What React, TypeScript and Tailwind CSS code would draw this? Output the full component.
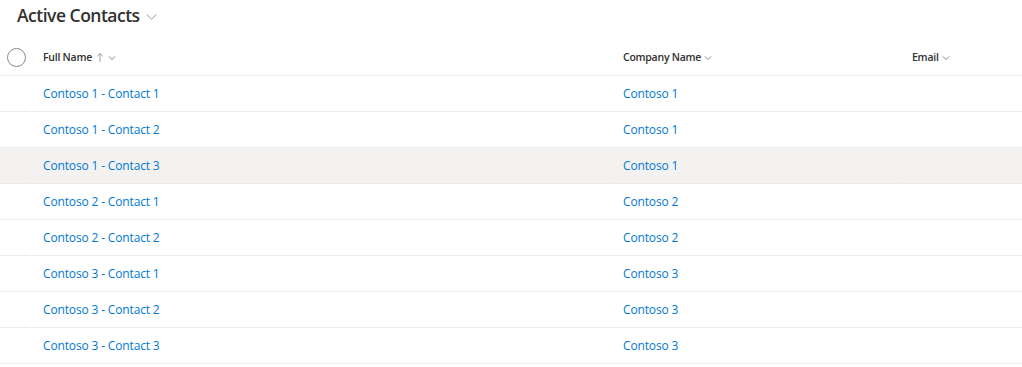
import React from 'react';

const rows = [
  { name: 'Contoso 1 - Contact 1', company: 'Contoso 1' },
  { name: 'Contoso 1 - Contact 2', company: 'Contoso 1' },
  { name: 'Contoso 1 - Contact 3', company: 'Contoso 1', hover: true },
  { name: 'Contoso 2 - Contact 1', company: 'Contoso 2' },
  { name: 'Contoso 2 - Contact 2', company: 'Contoso 2' },
  { name: 'Contoso 3 - Contact 1', company: 'Contoso 3' },
  { name: 'Contoso 3 - Contact 2', company: 'Contoso 3' },
  { name: 'Contoso 3 - Contact 3', company: 'Contoso 3' },
];

function Chevron({ className }: { className?: string }) {
  return (
    <svg viewBox="0 0 16 16" className={className} fill="none" stroke="currentColor" strokeWidth="1.2">
      <path d="M3 5.5l5 5 5-5" />
    </svg>
  );
}

const cols = 'grid grid-cols-[31px_579px_287px_1fr] gap-x-px';
const cell = 'border-b border-[#edebe9] flex items-center';

export default function App() {
  return (
    <div className="w-[1022px] h-[367px] bg-white overflow-hidden text-[#323130]" style={{ fontFamily: '"Open Sans", "Noto Sans", sans-serif' }}>
      <div className="h-[40px] flex items-center pl-[17px] pb-[8px]">
        <h1 className="text-[17.5px] font-semibold leading-none tracking-[-0.5px]">Active Contacts</h1>
        <svg viewBox="0 0 12 7" className="w-[11px] h-[6px] ml-[6px] mt-[2px] text-[#8a8886]" fill="none" stroke="currentColor" strokeWidth="1">
          <path d="M0.5 0.8L6 6l5.5-5.2" />
        </svg>
      </div>

      <div className={`${cols} h-[36px]`}>
        <div className={`${cell} justify-center pl-[2px]`}>
          <span className="w-[19px] h-[19px] rounded-full border border-[#8a8886]" />
        </div>
        <div className={`${cell} pl-[11px] text-[10.5px] font-semibold tracking-[-0.25px]`}>
          Full Name
          <svg viewBox="0 0 10 12" className="w-[8px] h-[11px] ml-[4px] text-[#8a8886]" fill="none" stroke="currentColor" strokeWidth="1">
            <path d="M5 11.5V1M1.5 4.5L5 1l3.5 3.5" />
          </svg>
          <Chevron className="w-[10px] h-[10px] ml-[3px] text-[#605e5c]" />
        </div>
        <div className={`${cell} pl-[11px] text-[10.5px] font-semibold tracking-[-0.25px]`}>
          Company Name
          <Chevron className="w-[10px] h-[10px] ml-[2px] text-[#605e5c]" />
        </div>
        <div className={`${cell} pl-[12px] text-[10.5px] font-semibold tracking-[-0.25px]`}>
          Email
          <Chevron className="w-[10px] h-[10px] ml-[2px] text-[#605e5c]" />
        </div>
      </div>

      {rows.map((r) => (
        <div key={r.name} className={`${cols} h-[36px] ${r.hover ? 'bg-[#f3f2f1]' : 'bg-white'}`}>
          <div className={cell} />
          <div className={`${cell} pl-[11px] text-[12px] tracking-[-0.15px] text-[#0078d4]`}>{r.name}</div>
          <div className={`${cell} pl-[11px] text-[12px] tracking-[-0.15px] text-[#0078d4]`}>{r.company}</div>
          <div className={cell} />
        </div>
      ))}
    </div>
  );
}
